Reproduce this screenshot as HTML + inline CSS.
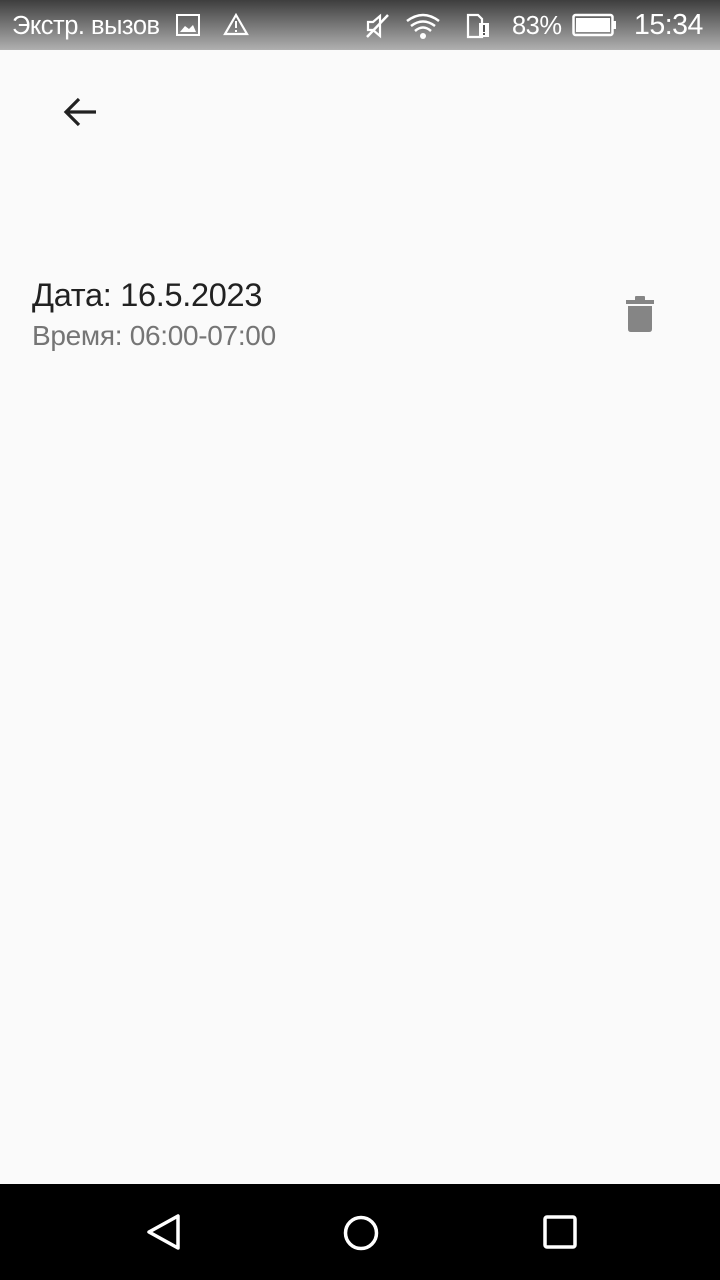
<!DOCTYPE html>
<html><head><meta charset="utf-8"><style>
*{margin:0;padding:0;box-sizing:border-box}
body{width:720px;height:1280px;background:#fafafa;font-family:"Liberation Sans","DejaVu Sans",sans-serif;position:relative;overflow:hidden}
#sb{position:absolute;left:0;top:0;width:720px;height:50px;background:linear-gradient(#3e3e3e,#b0b0b0);color:#fff}
.t{position:absolute;top:12px;font-size:25.5px;letter-spacing:-0.5px}
#nav{position:absolute;left:0;top:1184px;width:720px;height:96px;background:#000}
</style></head><body>
<div id="sb">
<div class="t" style="left:12px">Экстр. вызов</div>
<svg style="position:absolute;left:175px;top:13px" width="26" height="24" viewBox="0 0 26 24"><rect x="2" y="2" width="22" height="20" fill="none" stroke="#fff" stroke-width="2"/><path d="M5 19 L10 13 L14 16 L18 12 L21 19Z" fill="#fff"/></svg>
<svg style="position:absolute;left:223px;top:13px" width="26" height="24" viewBox="0 0 26 24"><path d="M13 2 L24 21 H2Z" fill="none" stroke="#fff" stroke-width="2.2"/><rect x="12" y="8" width="2" height="7" fill="#fff"/><rect x="12" y="17" width="2" height="2" fill="#fff"/></svg>
<svg style="position:absolute;left:364px;top:12px" width="28" height="28" viewBox="0 0 28 28"><path d="M4 10 H9 L16 4 V24 L9 18 H4Z" fill="none" stroke="#fff" stroke-width="2.2"/><path d="M3 25 L24 3" stroke="#fff" stroke-width="2.5"/></svg>
<svg style="position:absolute;left:404px;top:12px" width="38" height="28" viewBox="0 0 38 28"><path d="M3 9 Q19 -3 35 9 M7 14 Q19 5 31 14 M11 19 Q19 12 27 19" fill="none" stroke="#fff" stroke-width="2.5"/><circle cx="19" cy="24" r="3" fill="#fff"/></svg>
<svg style="position:absolute;left:466px;top:13px" width="26" height="26" viewBox="0 0 26 26"><path d="M2 2 H12 L16 6 V24 H2Z" fill="none" stroke="#fff" stroke-width="2.2"/><rect x="13" y="10" width="10" height="14" fill="#fff"/><rect x="17" y="12" width="2" height="7" fill="#555"/><rect x="17" y="20" width="2" height="2" fill="#555"/></svg>
<div class="t" style="left:512px">83%</div>
<svg style="position:absolute;left:572px;top:13px" width="46" height="24" viewBox="0 0 46 24"><rect x="1.5" y="2" width="39" height="20" rx="2" fill="none" stroke="#fff" stroke-width="2.5"/><rect x="4" y="5" width="34" height="14" fill="#fff"/><rect x="41" y="8" width="3" height="8" fill="#fff"/></svg>
<div class="t" style="left:634px;font-size:28.5px;top:9px">15:34</div>
</div>
<svg style="position:absolute;left:62px;top:95px" width="36" height="34" viewBox="0 0 36 34"><path d="M34 17 H5 M17 4 L4 17 L17 30" fill="none" stroke="#212121" stroke-width="3.2"/></svg>
<div style="position:absolute;left:32px;top:277px;font-size:32.5px;color:#212121;letter-spacing:-0.3px">Дата: 16.5.2023</div>
<div style="position:absolute;left:32px;top:320px;font-size:28px;color:#757575;letter-spacing:-0.3px">Время: 06:00-07:00</div>
<svg style="position:absolute;left:626px;top:295px" width="28" height="38" viewBox="0 0 28 38"><rect x="0" y="5" width="28" height="4" fill="#858585"/><rect x="9" y="1" width="10" height="5" rx="1" fill="#858585"/><path d="M2 11 H26 V34 Q26 37 23 37 H5 Q2 37 2 34Z" fill="#858585"/></svg>
<div id="nav">
<svg style="position:absolute;left:144px;top:28px" width="40" height="40" viewBox="0 0 40 40"><path d="M34 4 V36 L5 20Z" fill="none" stroke="#fff" stroke-width="3.5" stroke-linejoin="round"/></svg>
<svg style="position:absolute;left:341px;top:29px" width="40" height="40" viewBox="0 0 40 40"><circle cx="20" cy="20" r="15.5" fill="none" stroke="#fff" stroke-width="3.5"/></svg>
<svg style="position:absolute;left:542px;top:30px" width="36" height="36" viewBox="0 0 36 36"><rect x="3" y="3" width="30" height="30" rx="2" fill="none" stroke="#fff" stroke-width="3.5"/></svg>
</div>
</body></html>
